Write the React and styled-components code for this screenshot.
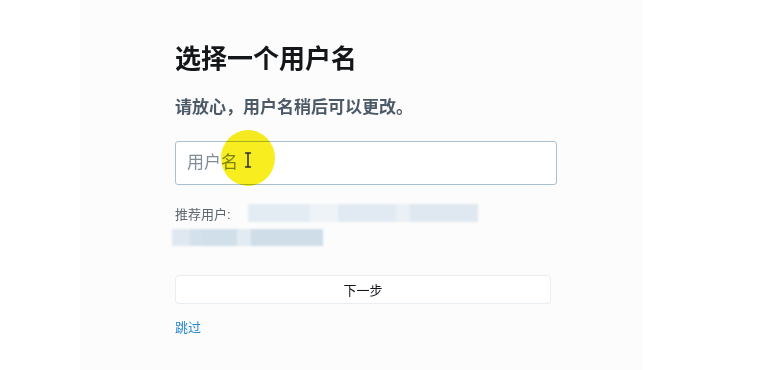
import React from 'react'
import styled, { createGlobalStyle } from 'styled-components'

const GlobalStyle = createGlobalStyle`
  html, body {
    margin: 0;
    padding: 0;
    background: #ffffff;
    font-family: "Liberation Sans", "Noto Sans CJK SC", sans-serif;
  }
`

const Page = styled.div`
  width: 760px;
  height: 370px;
  display: flex;
  padding-left: 80px;
  box-sizing: border-box;
  overflow: hidden;
`

const Card = styled.div`
  width: 562px;
  height: 100%;
  background: #fcfcfc;
  padding: 43px 0 0 95px;
  box-sizing: border-box;
`

const Title = styled.h2`
  margin: 0;
  font-size: 26px;
  line-height: 32px;
  font-weight: 700;
  color: #14171a;
`

const Subtitle = styled.p`
  margin: 22px 0 0;
  font-size: 17px;
  line-height: 22px;
  font-weight: 700;
  color: #4c5966;
`

const InputWrap = styled.div`
  position: relative;
  margin-top: 22px;
  width: 382px;
  height: 44px;
`

const Input = styled.input`
  width: 100%;
  height: 100%;
  box-sizing: border-box;
  border: 1px solid #a9c0d2;
  border-radius: 3px;
  background: #ffffff;
  padding: 0 11px;
  font-family: inherit;
  font-size: 17px;
  outline: none;
  &::placeholder {
    color: #818d98;
  }
`

const Highlight = styled.div`
  position: absolute;
  left: 46px;
  top: -11px;
  width: 54px;
  height: 56px;
  border-radius: 50%;
  background: rgba(246, 234, 0, 0.88);
  pointer-events: none;
  mix-blend-mode: multiply;
`

const Cursor = styled.svg`
  position: absolute;
  left: 69px;
  top: 11px;
  pointer-events: none;
`

const SuggestRow = styled.div`
  display: flex;
  align-items: center;
  margin-top: 18px;
  height: 20px;
`

const SuggestLabel = styled.span`
  font-size: 13px;
  color: #5c6770;
  width: 73px;
`

const Blur = styled.div`
  display: flex;
  height: ${p => p.$h}px;
  margin-left: ${p => p.$offset || 0}px;
  filter: blur(1px);
`

const BlurSeg = styled.div`
  height: 100%;
  background: ${p => p.$c};
`

const Button = styled.button`
  display: block;
  margin-top: 29px;
  width: 376px;
  height: 29px;
  background: #ffffff;
  border: 1px solid #e8edf1;
  border-radius: 4px;
  font-family: inherit;
  font-size: 13px;
  color: #14171a;
  cursor: pointer;
`

const Skip = styled.a`
  display: inline-block;
  margin-top: 13px;
  font-size: 13px;
  color: #2a89d4;
  text-decoration: none;
`

const row1 = [
  ['#e4ecf3', 62], ['#eef3f7', 28], ['#e1eaf2', 58], ['#eaf0f5', 14], ['#dfe8f0', 68],
]
const row2 = [
  ['#dfe8f0', 18], ['#d3e1ec', 12], ['#d1dfea', 35], ['#e2ebf2', 14], ['#cfdde9', 72],
]

export default function App() {
  return (
    <>
      <GlobalStyle />
      <Page>
        <Card>
          <Title>选择一个用户名</Title>
          <Subtitle>请放心，用户名稍后可以更改。</Subtitle>
          <InputWrap>
            <Input placeholder="用户名" />
            <Highlight />
            <Cursor width="8" height="16" viewBox="0 0 8 16">
              <path d="M1 1h6M4 1v14M1 15h6" stroke="#333" strokeWidth="1.6" fill="none" />
            </Cursor>
          </InputWrap>
          <SuggestRow>
            <SuggestLabel>推荐用户:</SuggestLabel>
            <Blur $h={18}>
              {row1.map(([c, w], i) => <BlurSeg key={i} $c={c} style={{ width: w }} />)}
            </Blur>
          </SuggestRow>
          <Blur $h={17} $offset={-3} style={{ marginTop: 6, width: 151 }}>
            {row2.map(([c, w], i) => <BlurSeg key={i} $c={c} style={{ width: w }} />)}
          </Blur>
          <Button>下一步</Button>
          <Skip href="#">跳过</Skip>
        </Card>
      </Page>
    </>
  )
}
